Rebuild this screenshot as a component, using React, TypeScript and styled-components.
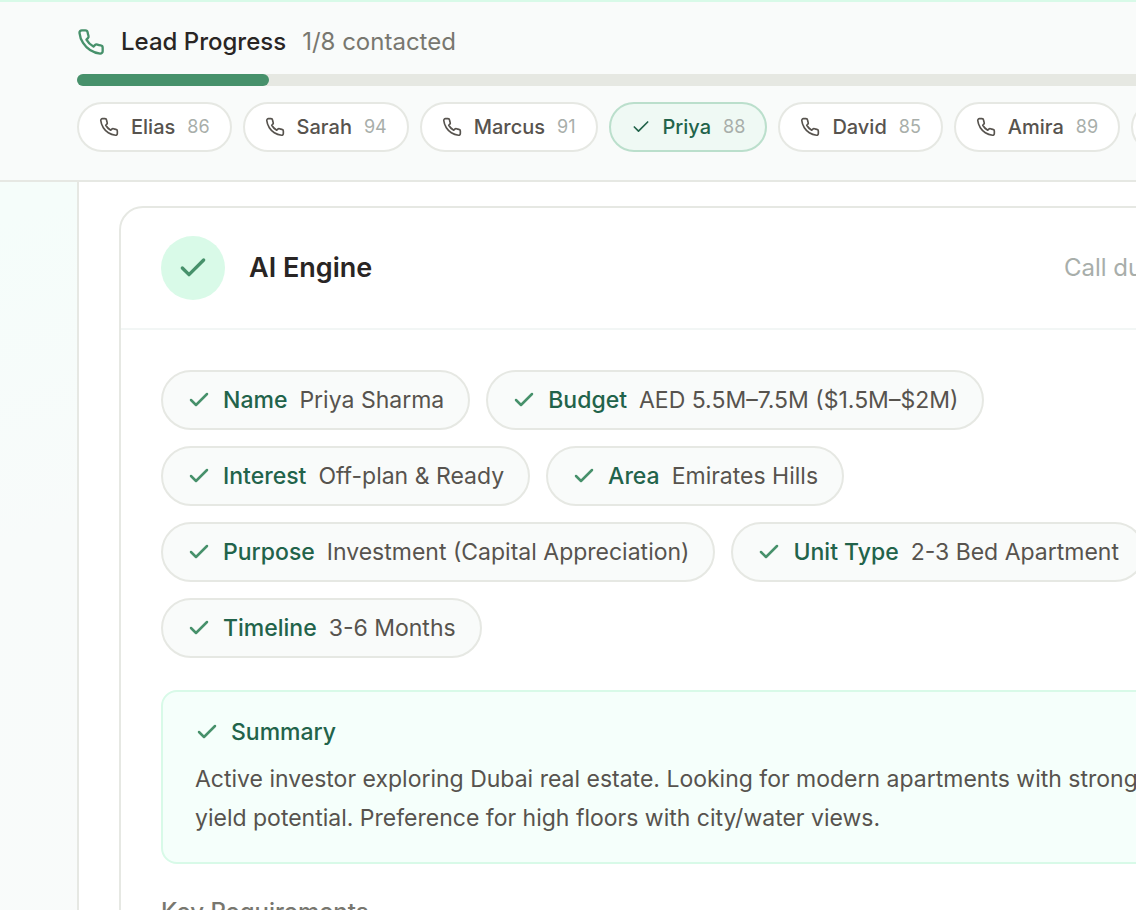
import React from "react";
import styled, { createGlobalStyle } from "styled-components";
import { Check } from "lucide-react";

const GlobalStyle = createGlobalStyle`
  *, *::before, *::after { box-sizing: border-box; }
  html, body { margin: 0; overflow: hidden; }
  body {
    font-family: Inter, "Liberation Sans", sans-serif;
    font-size: 24px;
    line-height: 32px;
    color: #57534e;
    background: #f9fafa;
  }
  h1, h2, h3, p, dl, dd { margin: 0; padding: 0; font-size: inherit; font-weight: inherit; }
  svg { flex: none; display: block; }
`;

const Page = styled.div`
  height: 100vh;
  display: flex;
  flex-direction: column;
  overflow: hidden;
  background: linear-gradient(165deg, #f5fdfa 18%, #f8fbfa 45%, #f9fbfa 100%);
`;

const Header = styled.header`
  flex: none;
  display: flex;
  flex-direction: column;
  gap: 16px;
  padding: 24px 0 28px 77px;
  background: #f9fbfa;
  border-top: 2px solid #d8fae8;
  border-bottom: 2px solid #e6e8e3;
`;

const TitleRow = styled.div`
  display: flex;
  align-items: center;
  gap: 16px;
  svg { color: #47916b; }
`;

const Title = styled.h1`
  font-weight: 500;
  color: #292524;
`;

const Count = styled.span`
  color: #78776f;
`;

const Track = styled.div`
  height: 12px;
  min-width: 1536px;
  border-radius: 6px;
  background: #e6e8e2;
`;

const Fill = styled.div`
  height: 100%;
  border-radius: 6px;
  background: #47916b;
`;

const LeadList = styled.div`
  display: flex;
  gap: 11px;
`;

const LeadButton = styled.button<{ $done?: boolean }>`
  flex: none;
  display: flex;
  align-items: center;
  gap: 12px;
  height: 50px;
  padding: 0 20px;
  border: 2px solid ${(p) => (p.$done ? "#bbdfcc" : "#e6e8e3")};
  border-radius: 25px;
  background: ${(p) => (p.$done ? "#eff9f4" : "#ffffff")};
  color: ${(p) => (p.$done ? "#22634a" : "#57534e")};
  font: 500 20px/28px Inter, "Liberation Sans", sans-serif;
`;

const Score = styled.span`
  font-size: 18px;
  font-weight: 400;
  color: #a8aeaa;
`;

const Panel = styled.main`
  flex: 1;
  min-width: 1220px;
  margin-left: 77px;
  padding: 24px 0 0 40px;
  background: #ffffff;
  border-left: 2px solid #e6e8e3;
`;

const Card = styled.section`
  width: 1130px;
  border: 2px solid #e6e8e3;
  border-radius: 24px;
`;

const CardHeader = styled.div`
  display: flex;
  align-items: center;
  gap: 24px;
  padding: 28px 40px;
  border-bottom: 2px solid #f2f6f5;
`;

const StatusCircle = styled.div`
  display: grid;
  place-items: center;
  width: 64px;
  height: 64px;
  border-radius: 50%;
  background: #d9fae8;
  color: #47916b;
`;

const CardTitle = styled.h2`
  flex: 1;
  font-size: 27px;
  font-weight: 600;
  color: #292524;
`;

const Duration = styled.span`
  color: #a8aeaa;
`;

const CardBody = styled.div`
  display: flex;
  flex-direction: column;
  gap: 32px;
  padding: 40px;
`;

const Facts = styled.dl`
  display: flex;
  flex-wrap: wrap;
  gap: 16px;
`;

const Fact = styled.div`
  display: flex;
  align-items: center;
  gap: 12px;
  height: 60px;
  padding: 0 24px;
  border: 2px solid #e6e8e3;
  border-radius: 30px;
  background: #f9fbfa;
  font-size: 23px;
  svg { color: #47916b; }
  dt { font-weight: 500; color: #22634a; }
`;

const Summary = styled.section`
  display: flex;
  flex-direction: column;
  gap: 12px;
  padding: 24px 32px;
  border: 2px solid #d8fae8;
  border-radius: 16px;
  background: #f5fffb;
  font-size: 23px;
`;

const SummaryTitle = styled.h3`
  display: flex;
  align-items: center;
  gap: 12px;
  font-weight: 500;
  color: #22634a;
  svg { color: #47916b; }
`;

const SummaryText = styled.p`
  line-height: 39px;
`;

const SectionTitle = styled.h3`
  font-weight: 500;
  color: #78776f;
`;

const PhoneIcon = ({ size }: { size: number }) => (
  <svg
    width={size}
    height={size}
    viewBox="0 0 24 24"
    fill="none"
    stroke="currentColor"
    strokeWidth={2}
    strokeLinecap="round"
    strokeLinejoin="round"
    aria-hidden="true"
  >
    <path d="M22 16.92v3a2 2 0 0 1-2.18 2 19.79 19.79 0 0 1-8.63-3.07 19.5 19.5 0 0 1-6-6 19.79 19.79 0 0 1-3.07-8.67A2 2 0 0 1 4.11 2h3a2 2 0 0 1 2 1.72 12.84 12.84 0 0 0 .7 2.81 2 2 0 0 1-.45 2.11L8.09 9.91a16 16 0 0 0 6 6l1.27-1.27a2 2 0 0 1 2.11-.45 12.84 12.84 0 0 0 2.81.7A2 2 0 0 1 22 16.92z" />
  </svg>
);

const leads = [
  { name: "Elias", score: 86 },
  { name: "Sarah", score: 94 },
  { name: "Marcus", score: 91 },
  { name: "Priya", score: 88, done: true },
  { name: "David", score: 85 },
  { name: "Amira", score: 89 },
];

const contacted = 1;
const total = 8;

const facts = [
  ["Name", "Priya Sharma"],
  ["Budget", "AED 5.5M–7.5M ($1.5M–$2M)"],
  ["Interest", "Off-plan & Ready"],
  ["Area", "Emirates Hills"],
  ["Purpose", "Investment (Capital Appreciation)"],
  ["Unit Type", "2-3 Bed Apartment"],
  ["Timeline", "3-6 Months"],
];

export default function App() {
  return (
    <>
      <GlobalStyle />
      <Page>
        <Header>
          <TitleRow>
            <PhoneIcon size={28} />
            <Title>Lead Progress</Title>
            <Count>{`${contacted}/${total} contacted`}</Count>
          </TitleRow>
          <Track>
            <Fill style={{ width: `${(contacted / total) * 100}%` }} />
          </Track>
          <LeadList>
            {leads.map((l) => (
              <LeadButton key={l.name} type="button" $done={l.done}>
                {l.done ? <Check size={20} /> : <PhoneIcon size={20} />}
                {l.name}
                <Score>{l.score}</Score>
              </LeadButton>
            ))}
            <LeadButton type="button" aria-label="Next lead">
              <PhoneIcon size={20} />
            </LeadButton>
          </LeadList>
        </Header>
        <Panel>
          <Card>
            <CardHeader>
              <StatusCircle><Check size={32} strokeWidth={2.5} /></StatusCircle>
              <CardTitle>AI Engine</CardTitle>
              <Duration>Call duration</Duration>
            </CardHeader>
            <CardBody>
              <Facts>
                {facts.map(([label, value]) => (
                  <Fact key={label}>
                    <Check size={24} strokeWidth={2.5} />
                    <dt>{label}</dt>
                    <dd>{value}</dd>
                  </Fact>
                ))}
              </Facts>
              <Summary>
                <SummaryTitle><Check size={24} strokeWidth={2.5} />Summary</SummaryTitle>
                <SummaryText>
                  Active investor exploring Dubai real estate. Looking for modern apartments with strong
                  yield potential. Preference for high floors with city/water views.
                </SummaryText>
              </Summary>
              <SectionTitle>Key Requirements</SectionTitle>
            </CardBody>
          </Card>
        </Panel>
      </Page>
    </>
  );
}
